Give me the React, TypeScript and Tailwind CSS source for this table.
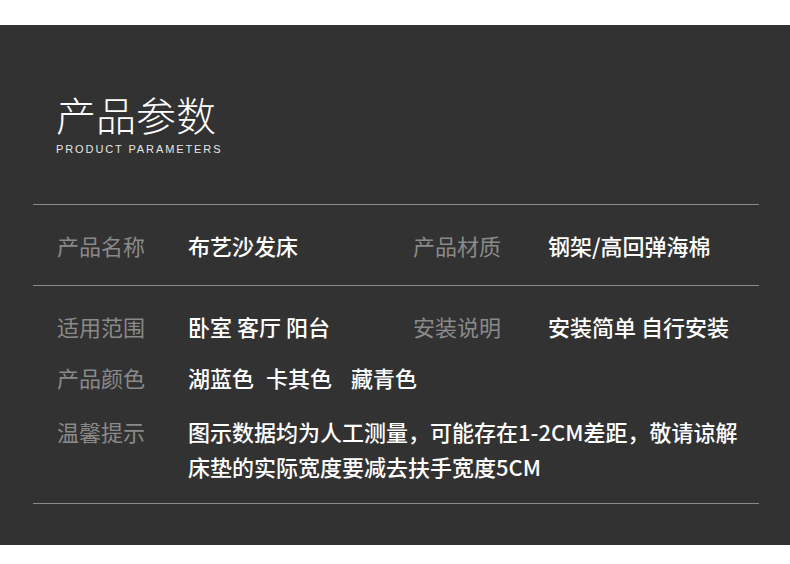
const cjk = "font-['Noto_Sans_CJK_SC','Microsoft_YaHei',sans-serif]";

interface Param {
  label: string;
  value: React.ReactNode;
}

function Cell(props: Param) {
  return (
    <>
      <div className="text-[#8a8a8a] text-[22px] leading-[30px]">{props.label}</div>
      <div className="text-white font-medium text-[22px] leading-[30px]">{props.value}</div>
    </>
  );
}

export default function App() {
  return (
    <div className={`w-[790px] h-[564px] bg-white pt-[25px] ${cjk}`}>
      <div className="h-[520px] bg-[#323232] flex flex-col">
        {/* heading */}
        <div className="pl-[56px] pt-[69px]">
          <h1 className="text-white font-light text-[40px] leading-[40px]">产品参数</h1>
          <p className="mt-[10px] text-[#e6e6e6] text-[11px] leading-[11px] tracking-[1.9px] font-['Liberation_Sans',sans-serif]">
            PRODUCT PARAMETERS
          </p>
        </div>

        <div className="mt-[49px] ml-[33px] w-[726px]">
          <div className="border-t border-[#8a8a8a]" />

          {/* row 1 */}
          <div className="h-[80px] grid grid-cols-[131px_225px_135px_1fr] items-center pl-[24px]">
            <Cell label="产品名称" value="布艺沙发床" />
            <Cell label="产品材质" value="钢架/高回弹海棉" />
          </div>

          <div className="border-t border-[#8a8a8a]" />

          {/* row 2 */}
          <div className="mt-[25px] grid grid-cols-[131px_225px_135px_1fr] pl-[24px]">
            <Cell label="适用范围" value="卧室 客厅 阳台" />
            <Cell label="安装说明" value="安装简单 自行安装" />
          </div>

          {/* row 3 */}
          <div className="mt-[21px] grid grid-cols-[131px_1fr] pl-[24px]">
            <Cell
              label="产品颜色"
              value={
                <span className="flex">
                  <span>湖蓝色</span>
                  <span className="ml-[12px]">卡其色</span>
                  <span className="ml-[19px]">藏青色</span>
                </span>
              }
            />
          </div>

          {/* row 4 */}
          <div className="mt-[22px] mb-[19px] grid grid-cols-[131px_1fr] pl-[24px] items-start">
            <div className="text-[#8a8a8a] text-[22px] leading-[35px]">温馨提示</div>
            <div className="text-white font-medium text-[22px] leading-[35px] whitespace-nowrap">
              图示数据均为人工测量，可能存在1-2CM差距，敬请谅解
              <br />
              床垫的实际宽度要减去扶手宽度5CM
            </div>
          </div>

          <div className="border-t border-[#8a8a8a]" />
        </div>
      </div>
    </div>
  );
}
